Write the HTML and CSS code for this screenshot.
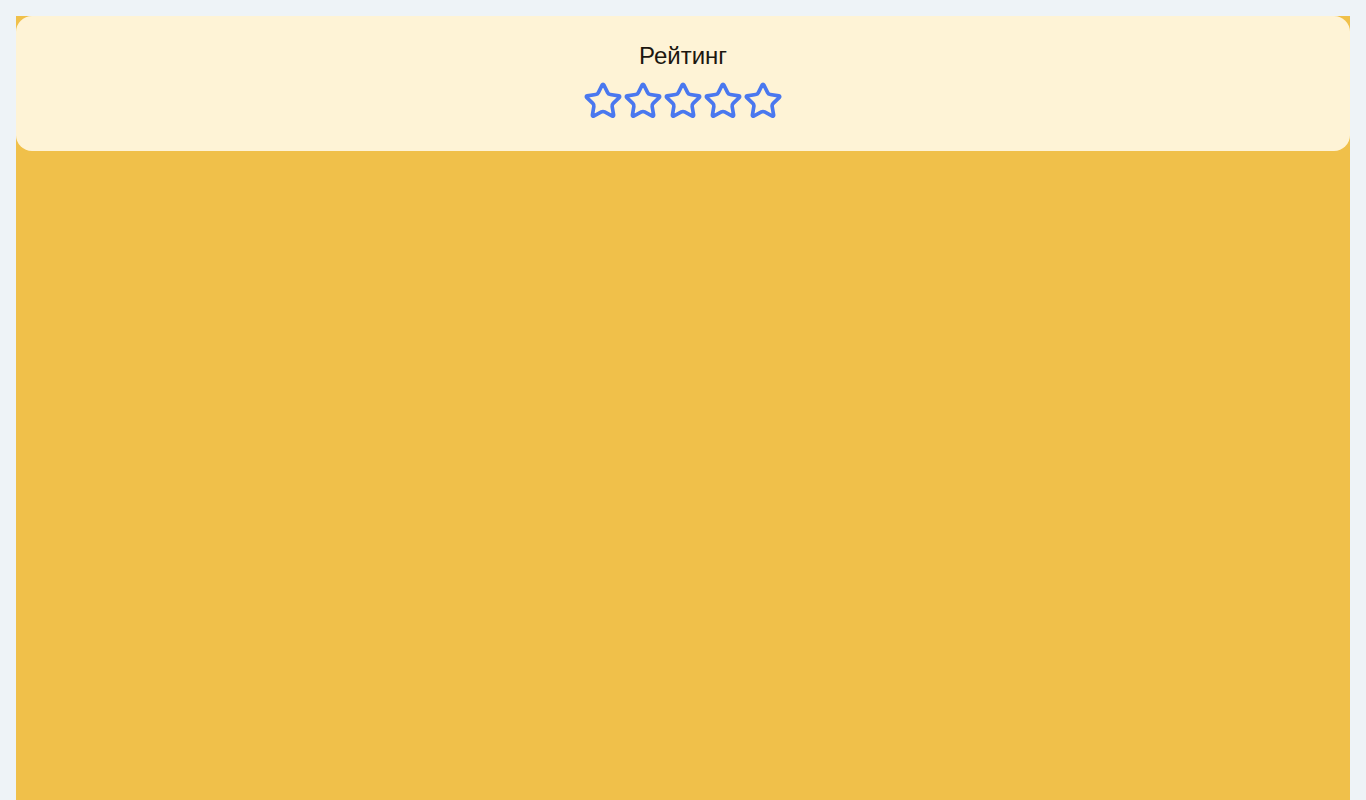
FILE: index.html
```html
<!DOCTYPE html>
<html lang="ru">
<head>
<meta charset="utf-8">
<title>Рейтинг</title>
<link rel="stylesheet" href="styles.css">
</head>
<body>
<div class="page">
  <section class="card">
    <h1 class="title">Рейтинг</h1>
    <div class="stars">
      <svg class="star" viewBox="0 0 24 24"><path d="M11.525 2.295a.53.53 0 0 1 .95 0l2.31 4.679a2.123 2.123 0 0 0 1.595 1.16l5.166.756a.53.53 0 0 1 .294.904l-3.736 3.638a2.123 2.123 0 0 0-.611 1.878l.882 5.14a.53.53 0 0 1-.771.56l-4.618-2.428a2.122 2.122 0 0 0-1.973 0L6.396 21.01a.53.53 0 0 1-.77-.56l.881-5.139a2.122 2.122 0 0 0-.611-1.879L2.16 9.795a.53.53 0 0 1 .294-.906l5.165-.755a2.122 2.122 0 0 0 1.597-1.16z"/></svg>
      <svg class="star" viewBox="0 0 24 24"><path d="M11.525 2.295a.53.53 0 0 1 .95 0l2.31 4.679a2.123 2.123 0 0 0 1.595 1.16l5.166.756a.53.53 0 0 1 .294.904l-3.736 3.638a2.123 2.123 0 0 0-.611 1.878l.882 5.14a.53.53 0 0 1-.771.56l-4.618-2.428a2.122 2.122 0 0 0-1.973 0L6.396 21.01a.53.53 0 0 1-.77-.56l.881-5.139a2.122 2.122 0 0 0-.611-1.879L2.16 9.795a.53.53 0 0 1 .294-.906l5.165-.755a2.122 2.122 0 0 0 1.597-1.16z"/></svg>
      <svg class="star" viewBox="0 0 24 24"><path d="M11.525 2.295a.53.53 0 0 1 .95 0l2.31 4.679a2.123 2.123 0 0 0 1.595 1.16l5.166.756a.53.53 0 0 1 .294.904l-3.736 3.638a2.123 2.123 0 0 0-.611 1.878l.882 5.14a.53.53 0 0 1-.771.56l-4.618-2.428a2.122 2.122 0 0 0-1.973 0L6.396 21.01a.53.53 0 0 1-.77-.56l.881-5.139a2.122 2.122 0 0 0-.611-1.879L2.16 9.795a.53.53 0 0 1 .294-.906l5.165-.755a2.122 2.122 0 0 0 1.597-1.16z"/></svg>
      <svg class="star" viewBox="0 0 24 24"><path d="M11.525 2.295a.53.53 0 0 1 .95 0l2.31 4.679a2.123 2.123 0 0 0 1.595 1.16l5.166.756a.53.53 0 0 1 .294.904l-3.736 3.638a2.123 2.123 0 0 0-.611 1.878l.882 5.14a.53.53 0 0 1-.771.56l-4.618-2.428a2.122 2.122 0 0 0-1.973 0L6.396 21.01a.53.53 0 0 1-.77-.56l.881-5.139a2.122 2.122 0 0 0-.611-1.879L2.16 9.795a.53.53 0 0 1 .294-.906l5.165-.755a2.122 2.122 0 0 0 1.597-1.16z"/></svg>
      <svg class="star" viewBox="0 0 24 24"><path d="M11.525 2.295a.53.53 0 0 1 .95 0l2.31 4.679a2.123 2.123 0 0 0 1.595 1.16l5.166.756a.53.53 0 0 1 .294.904l-3.736 3.638a2.123 2.123 0 0 0-.611 1.878l.882 5.14a.53.53 0 0 1-.771.56l-4.618-2.428a2.122 2.122 0 0 0-1.973 0L6.396 21.01a.53.53 0 0 1-.77-.56l.881-5.139a2.122 2.122 0 0 0-.611-1.879L2.16 9.795a.53.53 0 0 1 .294-.906l5.165-.755a2.122 2.122 0 0 0 1.597-1.16z"/></svg>
    </div>
  </section>
</div>
</body>
</html>
```
FILE: styles.css
```css
html, body {
  margin: 0;
  padding: 0;
}
body {
  background: #eef3f7;
  padding: 16px 16px 0;
  font-family: "Liberation Sans", Arial, sans-serif;
}
.page {
  background: #f0c04a;
  min-height: 800px;
}
.card {
  background: #fef3d6;
  border-radius: 16px;
  height: 135px;
  box-sizing: border-box;
  padding-top: 24px;
  display: flex;
  flex-direction: column;
  align-items: center;
}
.title {
  margin: 0;
  font-size: 24px;
  font-weight: 400;
  line-height: 32px;
  color: #1c1710;
}
.stars {
  display: flex;
  margin-top: 9px;
}
.star {
  width: 40px;
  height: 40px;
  fill: none;
  stroke: #4a78ef;
  stroke-width: 2.2;
  stroke-linejoin: round;
  stroke-linecap: round;
}
```
